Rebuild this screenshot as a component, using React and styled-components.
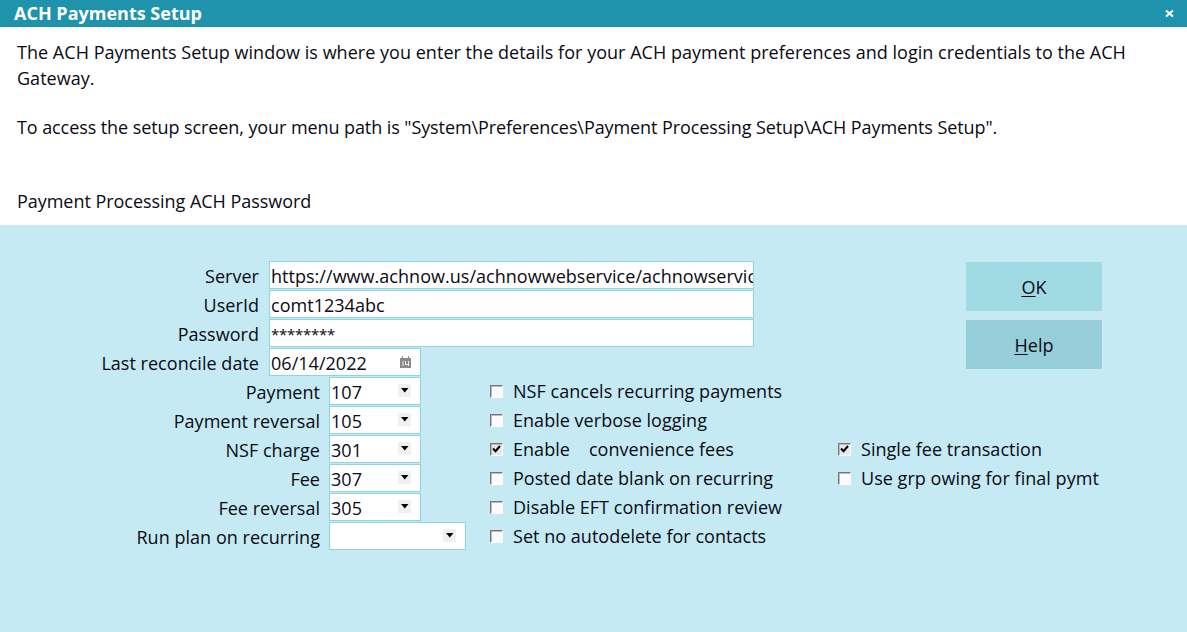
import React from "react";
import styled, { createGlobalStyle } from "styled-components";

const Global = createGlobalStyle`
  html, body { margin: 0; padding: 0; height: 100%; }
  body { font-family: "Open Sans", "Noto Sans", "Liberation Sans", sans-serif; color: #0a0a14; background: #c5eaf3; }
`;

const Window = styled.div`
  width: 1187px; height: 632px; display: flex; flex-direction: column; overflow: hidden;
  font-size: 18px; letter-spacing: 0.03px;
`;
const TitleBar = styled.header`
  height: 27px; background: #1f93ab; color: #fff; display: flex; align-items: center;
  justify-content: space-between; padding: 0 13px 0 14px; flex: none;
`;
const Title = styled.h1`
  margin: 0; font-size: 18px; font-weight: 700; line-height: 27px; letter-spacing: 0;
`;
const CloseIcon = styled.svg`width: 9px; height: 7px; display: block;`;
const Intro = styled.section`
  height: 198px; background: #fff; padding: 12px 17px 0; box-sizing: border-box; flex: none;
`;
const Para = styled.p`
  margin: 0 0 ${p => p.$after || 0}px; line-height: 26px; width: 1140px;
  letter-spacing: ${p => p.$track ?? 0.03}px;
`;
const Panel = styled.section`
  flex: 1; display: flex; align-items: flex-start; padding-top: 36px; background: #c5eaf3;
`;
const Fields = styled.div`
  width: 466px; flex: none; display: flex; flex-direction: column; gap: 1px;
`;
const Row = styled.div`
  display: flex; align-items: flex-start; height: 28px;
`;
const Label = styled.label`
  width: ${p => p.$w}px; text-align: right; white-space: nowrap; flex: none; line-height: 30px;
`;
const Box = styled.div`
  box-sizing: border-box; height: 28px; width: ${p => p.$w}px; margin-left: ${p => p.$gap}px;
  background: #fff; border: 1px solid #8fd4e2; padding-left: 1px; line-height: 28px;
  white-space: nowrap; overflow: hidden; position: relative; flex: none;
`;
const Masked = styled.span`
  vertical-align: 3px; font-size: 15px; letter-spacing: -0.25px;
`;
const BoxIcon = styled.span`
  position: absolute; right: ${p => p.$plain ? 8 : 9}px; top: 6px; width: 13px; height: 13px; display: flex;
  align-items: center; justify-content: center; background: ${p => p.$plain ? "transparent" : "#f0f0f0"};
`;
const Checks = styled.div`
  width: 348px; margin-left: 24px; flex: none; margin-top: 116px; display: flex; flex-direction: column;
`;
const CheckRow = styled.div`
  height: 29px; display: flex; align-items: center; white-space: nowrap;
`;
const CheckBox = styled.span`
  box-sizing: border-box; width: 13px; height: 13px; flex: none; margin-right: 10px; margin-top: -1px;
  border: 1px solid; border-color: #777 #fff #fff #777;
  box-shadow: inset 1px 1px 0 #bbb; display: flex; align-items: center; justify-content: center;
  background: ${p => p.$on ? "#e8e8e8" : "#fbfbfb"};
`;
const CheckText = styled.span`
  padding-bottom: 2px;
`;
const Gap = styled.span`display: inline-block; width: 19px;`;
const Side = styled.div`
  flex: none; width: 349px; display: flex; flex-direction: column; padding-top: 1px;
`;
const Buttons = styled.div`
  margin-left: 128px; width: 136px; display: flex; flex-direction: column; gap: 9px; margin-bottom: 66px;
`;
const Btn = styled.button`
  height: 49px; width: 136px; border: 0; padding: 0; background: ${p => p.$tone}; color: #0a0a14;
  font: inherit; letter-spacing: inherit;
  u { text-underline-offset: 2px; }
`;

const Arrow = () => (
  <svg width="8" height="5" viewBox="0 0 8 5"><path d="M0 0h7.5L3.75 4.5z" fill="#000" /></svg>
);
const Calendar = () => (
  <svg width="11" height="12" viewBox="0 0 11 12">
    <path d="M0 2h2V0h1v2h5V0h1v2h2v10H0z" fill="#8a8a8a" />
    <path d="M2.5 5h1v5h-1zM5 5h1v3h2V5h1v5H8V9H5z" fill="#eee" />
  </svg>
);
const Tick = () => (
  <svg width="9" height="8" viewBox="0 0 9 8"><path d="M1 3.5l2.5 2.7L8 1" fill="none" stroke="#000" strokeWidth="2" /></svg>
);
const Check = ({ on, children }) => (
  <CheckRow><CheckBox $on={on}>{on && <Tick />}</CheckBox><CheckText>{children}</CheckText></CheckRow>
);

const wide = [
  ["Server", "https://www.achnow.us/achnowwebservice/achnowservic"],
  ["UserId", "comt1234abc"],
];
const selects = [
  ["Payment", "107"], ["Payment reversal", "105"], ["NSF charge", "301"], ["Fee", "307"], ["Fee reversal", "305"],
];

export default function App() {
  return (
    <Window>
      <Global />
      <TitleBar>
        <Title>ACH Payments Setup</Title>
        <CloseIcon viewBox="0 0 9 7"><path d="M1 .5l7 6M8 .5l-7 6" stroke="#fff" strokeWidth="2" /></CloseIcon>
      </TitleBar>
      <Intro>
        <Para $after={23}>The ACH Payments Setup window is where you enter the details for your ACH payment preferences and login credentials to the ACH Gateway.</Para>
        <Para $after={48} $track={-0.085}>To access the setup screen, your menu path is "System\Preferences\Payment Processing Setup\ACH Payments Setup".</Para>
        <Para $track={-0.04}>Payment Processing ACH Password</Para>
      </Intro>
      <Panel>
        <Fields>
          {wide.map(([l, v]) => (
            <Row key={l}><Label $w={259}>{l}</Label><Box $w={485} $gap={10}>{v}</Box></Row>
          ))}
          <Row><Label $w={259}>Password</Label><Box $w={485} $gap={10}><Masked>********</Masked></Box></Row>
          <Row>
            <Label $w={259}>Last reconcile date</Label>
            <Box $w={152} $gap={10}>06/14/2022<BoxIcon $plain><Calendar /></BoxIcon></Box>
          </Row>
          {selects.map(([l, v]) => (
            <Row key={l}>
              <Label $w={320}>{l}</Label>
              <Box $w={92} $gap={9}>{v}<BoxIcon><Arrow /></BoxIcon></Box>
            </Row>
          ))}
          <Row>
            <Label $w={320}>Run plan on recurring</Label>
            <Box $w={137} $gap={9}><BoxIcon><Arrow /></BoxIcon></Box>
          </Row>
        </Fields>
        <Checks>
          <Check>NSF cancels recurring payments</Check>
          <Check>Enable verbose logging</Check>
          <Check on>Enable<Gap />convenience fees</Check>
          <Check>Posted date blank on recurring</Check>
          <Check>Disable EFT confirmation review</Check>
          <Check>Set no autodelete for contacts</Check>
        </Checks>
        <Side>
          <Buttons>
            <Btn $tone="#a0dbe4"><u>O</u>K</Btn>
            <Btn $tone="#96ced9"><u>H</u>elp</Btn>
          </Buttons>
          <Check on>Single fee transaction</Check>
          <Check>Use grp owing for final pymt</Check>
        </Side>
      </Panel>
    </Window>
  );
}
